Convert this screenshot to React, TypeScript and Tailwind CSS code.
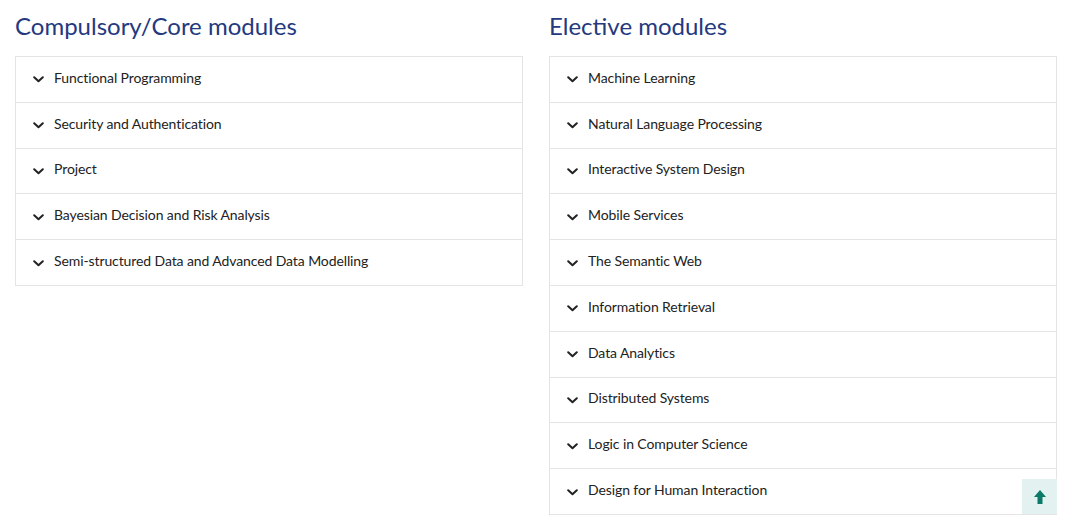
const core = [
  "Functional Programming",
  "Security and Authentication",
  "Project",
  "Bayesian Decision and Risk Analysis",
  "Semi-structured Data and Advanced Data Modelling",
];

const elective = [
  "Machine Learning",
  "Natural Language Processing",
  "Interactive System Design",
  "Mobile Services",
  "The Semantic Web",
  "Information Retrieval",
  "Data Analytics",
  "Distributed Systems",
  "Logic in Computer Science",
  "Design for Human Interaction",
];

function Chevron() {
  return (
    <svg width="11" height="7" viewBox="0 0 11 7" className="mr-[10px] mt-[5px] shrink-0">
      <polyline points="1.2,1.2 5.5,5.3 9.8,1.2" fill="none" stroke="#222" strokeWidth="2" strokeLinecap="round" strokeLinejoin="round" />
    </svg>
  );
}

function ModuleList({ title, items }: { title: string; items: string[] }) {
  return (
    <section className="w-[508px]">
      <h2 className="h-[56px] pt-[10px] text-[24px] leading-[32px] text-[#24397e]">{title}</h2>
      <ul className="border border-[#e4e4e4] border-b-0">
        {items.map((item) => (
          <li
            key={item}
            className="flex h-[45.8px] items-center border-b border-[#e4e4e4] pb-[4px] pl-[17px] text-[14px] tracking-[-0.1px] text-[#222]"
          >
            <Chevron />
            <span>{item}</span>
          </li>
        ))}
      </ul>
    </section>
  );
}

export default function App() {
  return (
    <main className="relative h-[528px] w-[1080px] overflow-hidden bg-white font-['Lato','Noto_Sans',sans-serif]">
      <div className="flex gap-[26px] pl-[15px]">
        <ModuleList title="Compulsory/Core modules" items={core} />
        <ModuleList title="Elective modules" items={elective} />
      </div>

      {/* back to top */}
      <button className="absolute left-[1022px] top-[479px] flex h-[35px] w-[35px] items-center justify-center bg-[#e4f1f1]">
        <svg width="12" height="14" viewBox="0 0 12 14" fill="#0b7a69">
          <path d="M6 0 L12 7 H8.5 V14 H3.5 V7 H0 Z" />
        </svg>
      </button>
    </main>
  );
}
